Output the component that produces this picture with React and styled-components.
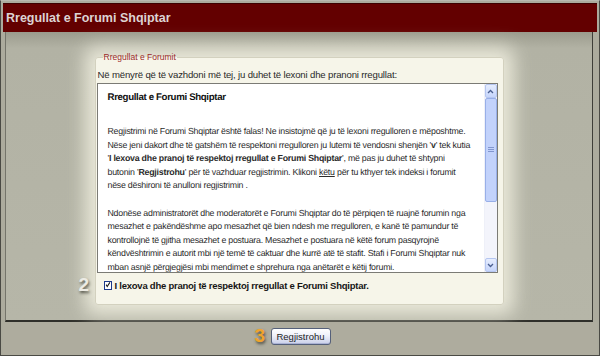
import React from 'react';
import styled, { createGlobalStyle } from 'styled-components';

const GlobalStyle = createGlobalStyle`
  html, body {
    margin: 0;
    padding: 0;
    background: #c9c7bb;
  }
  body {
    font-family: "Liberation Sans", Arial, sans-serif;
  }
`;

const Frame = styled.div`
  width: 600px;
  height: 356px;
  box-sizing: border-box;
  border: 1px solid #4a4a44;
  border-top-color: #b9b9b0;
  padding: 2px 2px 0;
  background: #acab9d;
  display: flex;
  flex-direction: column;
`;

const TitleBar = styled.div`
  height: 29px;
  flex: none;
  background: #630000;
  border-top: 1px solid #3c0000;
  box-sizing: border-box;
  display: flex;
  align-items: center;
  padding-left: 3px;
  color: #ddd3d3;
  font-size: 12.5px;
  font-weight: bold;
`;

const Main = styled.div`
  flex: none;
  height: 290px;
  box-sizing: border-box;
  margin: 0 4px 0 2px;
  border-left: 1px solid #74746a;
  border-right: 1px solid #3e3e38;
  border-bottom: 2px solid #2f2f2a;
  background: linear-gradient(#9b9b8d, #b2b2a4 16px, #b6b6a8);
  padding: 20px 0 0;
`;

const Fieldset = styled.fieldset`
  width: 409px;
  min-inline-size: 0;
  box-sizing: border-box;
  margin: 0 auto;
  padding: 0 5px 12px 0;
  border: 1px solid #d3d1bf;
  border-radius: 3px;
  background: #f6f5e9;
  box-shadow: 0 0 18px 10px rgba(238, 237, 222, 0.9);
`;

const Legend = styled.legend`
  margin-left: 7px;
  padding: 0 1px;
  font-size: 8.5px;
  line-height: 10px;
  color: #9b2a2a;
`;

const Intro = styled.div`
  margin: 7px 0 2px 2px;
  font-size: 9.6px;
  letter-spacing: -0.17px;
  line-height: 12px;
  color: #2a2a2a;
  white-space: nowrap;
`;

const RulesBox = styled.div`
  margin-left: 1px;
  height: 190px;
  box-sizing: border-box;
  border: 1px solid #7b7b75;
  background: #fff;
  display: flex;
`;

const RulesText = styled.div`
  flex: 1;
  min-width: 0;
  overflow: hidden;
  padding: 7px 4px 0 10px;
  font-size: 8.8px;
  letter-spacing: -0.23px;
  line-height: 13.6px;
  color: #2b2b2b;
  white-space: nowrap;
  text-rendering: geometricPrecision;
`;

const Line = styled.div`
  line-height: 13.6px;
`;

const RulesTitle = styled.div`
  font-size: 9.7px;
  letter-spacing: -0.35px;
  line-height: 14px;
  font-weight: bold;
  color: #111;
  margin-bottom: 20px;
`;

const Gap = styled.div`
  height: 13.6px;
`;

const Link = styled.span`
  text-decoration: underline;
`;

const Scrollbar = styled.div`
  width: 12px;
  flex: none;
  display: flex;
  flex-direction: column;
  background: #f3f4fb;
  border-left: 1px solid #eef0f8;
`;

const ScrollButton = styled.div`
  height: 14px;
  flex: none;
  box-sizing: border-box;
  border: 1px solid #b5c6f0;
  border-radius: 2px;
  background: linear-gradient(#e6edfe, #c6d5fb);
  display: flex;
  align-items: center;
  justify-content: center;
`;

const Thumb = styled.div`
  height: 104px;
  flex: none;
  box-sizing: border-box;
  border: 1px solid #98afe8;
  border-radius: 2px;
  background: #c2d2fb;
  display: flex;
  align-items: center;
  justify-content: center;
`;

const Track = styled.div`
  flex: 1;
`;

const CheckRow = styled.div`
  position: relative;
  margin-top: 5px;
  height: 14px;
  display: flex;
  align-items: center;
  gap: 3px;
  padding-left: 8px;
  font-size: 9.5px;
  letter-spacing: -0.24px;
  font-weight: bold;
  color: #161616;
  white-space: nowrap;
`;

const StepNumber = styled.span`
  position: absolute;
  left: ${p => p.$left}px;
  top: ${p => p.$top}px;
  font-size: 19px;
  font-weight: bold;
  letter-spacing: 0;
  line-height: 19px;
  color: ${p => p.$color};
  text-shadow: 1px 2px 3px rgba(40, 40, 30, 0.75);
`;

const CheckBox = styled.span`
  width: 8px;
  height: 9px;
  flex: none;
  box-sizing: border-box;
  border: 1px solid #1c3a8c;
  background: #fff;
  display: flex;
  align-items: center;
  justify-content: center;
`;

const Footer = styled.div`
  flex: 1;
  display: flex;
  justify-content: center;
  padding-top: 4px;
  background: #aeac9e;
`;

const ButtonWrap = styled.div`
  position: relative;
`;

const Button = styled.button`
  width: 60px;
  height: 17px;
  padding: 0;
  margin-left: 1px;
  border: 1px solid #55607a;
  border-radius: 3px;
  background: linear-gradient(#ffffff, #eef0fa 45%, #c9cfe8);
  font-family: "Liberation Sans", Arial, sans-serif;
  font-size: 9.5px;
  color: #1e1e1e;
  box-shadow: inset 0 -1px 0 #aab2d4;
`;

const Chevron = ({ up }) => (
  <svg width="7" height="5" viewBox="0 0 7 5">
    <path
      d={up ? 'M1 4 L3.5 1.5 L6 4' : 'M1 1 L3.5 3.5 L6 1'}
      fill="none"
      stroke="#4a5f90"
      strokeWidth="1.3"
    />
  </svg>
);

const Grip = () => (
  <svg width="6" height="6" viewBox="0 0 6 6">
    <path d="M0 0.5H6M0 2.5H6M0 4.5H6" stroke="#8196cf" strokeWidth="1" />
  </svg>
);

const Tick = () => (
  <svg width="8" height="8" viewBox="0 0 8 8">
    <path d="M1.5 3.5 L3 6 L6.5 0.5" fill="none" stroke="#1a1a1a" strokeWidth="1.4" />
  </svg>
);

export default function App() {
  return (
    <>
      <GlobalStyle />
      <Frame>
        <TitleBar>Rregullat e Forumi Shqiptar</TitleBar>
        <Main>
          <Fieldset>
            <Legend>Rregullat e Forumit</Legend>
            <Intro>Në mënyrë që të vazhdoni më tej, ju duhet të lexoni dhe pranoni rregullat:</Intro>
            <RulesBox>
              <RulesText>
                <RulesTitle>Rregullat e Forumi Shqiptar</RulesTitle>
                <Line>Regjistrimi në Forumi Shqiptar është falas! Ne insistojmë që ju të lexoni rregulloren e mëposhtme.</Line>
                <Line>Nëse jeni dakort dhe të gatshëm të respektoni rregulloren ju lutemi të vendosni shenjën '<b>v</b>' tek kutia</Line>
                <Line>'<b>I lexova dhe pranoj të respektoj rregullat e Forumi Shqiptar</b>', më pas ju duhet të shtypni</Line>
                <Line>butonin '<b>Regjistrohu</b>' për të vazhduar regjistrimin. Klikoni <Link>këtu</Link> për tu kthyer tek indeksi i forumit</Line>
                <Line>nëse dëshironi të anulloni regjistrimin .</Line>
                <Gap />
                <Line>Ndonëse administratorët dhe moderatorët e Forumi Shqiptar do të përpiqen të ruajnë forumin nga</Line>
                <Line>mesazhet e pakëndëshme apo mesazhet që bien ndesh me rregulloren, e kanë të pamundur të</Line>
                <Line>kontrollojnë të gjitha mesazhet e postuara. Mesazhet e postuara në këtë forum pasqyrojnë</Line>
                <Line>këndvështrimin e autorit mbi një temë të caktuar dhe kurrë atë të stafit. Stafi i Forumi Shqiptar nuk</Line>
                <Line>mban asnjë përgjegjësi mbi mendimet e shprehura nga anëtarët e këtij forumi.</Line>
              </RulesText>
              <Scrollbar>
                <ScrollButton><Chevron up /></ScrollButton>
                <Thumb><Grip /></Thumb>
                <Track />
                <ScrollButton><Chevron /></ScrollButton>
              </Scrollbar>
            </RulesBox>
            <CheckRow>
              <StepNumber $left={-17} $top={-3} $color="#ecebe4">2</StepNumber>
              <CheckBox><Tick /></CheckBox>
              I lexova dhe pranoj të respektoj rregullat e Forumi Shqiptar.
            </CheckRow>
          </Fieldset>
        </Main>
        <Footer>
          <ButtonWrap>
            <StepNumber $left={-15} $top={0} $color="#f0a32c">3</StepNumber>
            <Button>Regjistrohu</Button>
          </ButtonWrap>
        </Footer>
      </Frame>
    </>
  );
}
